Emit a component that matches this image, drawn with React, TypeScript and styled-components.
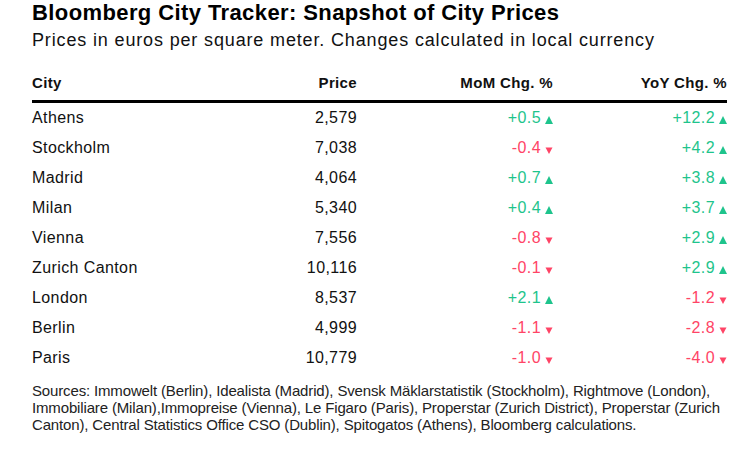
import React from "react";
import styled, { createGlobalStyle } from "styled-components";

const Global = createGlobalStyle`
  html, body { margin: 0; padding: 0; background: #fff; }
  body { font-family: "Liberation Sans", Arial, sans-serif; color: #111; }
`;

const Page = styled.div`
  width: 754px;
  height: 464px;
  padding: 0 27px 0 32px;
  box-sizing: border-box;
  overflow: hidden;
`;

const Title = styled.h1`
  margin: 0;
  padding-top: 1px;
  font-size: 22px;
  line-height: 24px;
  font-weight: 700;
  letter-spacing: 0.4px;
  color: #000;
`;

const Subtitle = styled.p`
  margin: 4px 0 0;
  font-size: 18px;
  line-height: 22px;
  letter-spacing: 0.85px;
  color: #111;
`;

const Table = styled.div`
  margin-top: 22px;
  display: grid;
  grid-template-columns: 200px 125px 196px 174px;
`;

const HeadCell = styled.div<{ $right?: boolean }>`
  font-size: 15px;
  font-weight: 700;
  line-height: 20px;
  letter-spacing: 0.35px;
  padding-bottom: 7px;
  text-align: ${(p) => (p.$right ? "right" : "left")};
  border-bottom: 3px solid #000;
  color: #111;
`;

const Cell = styled.div<{ $right?: boolean }>`
  font-size: 16px;
  line-height: 30px;
  letter-spacing: 0.4px;
  text-align: ${(p) => (p.$right ? "right" : "left")};
  color: #111;
`;

const Change = styled.div<{ $up: boolean }>`
  font-size: 16px;
  line-height: 30px;
  letter-spacing: 0.4px;
  display: flex;
  justify-content: flex-end;
  align-items: center;
  gap: 4px;
  color: ${(p) => (p.$up ? "#1ec48c" : "#ff4466")};
`;

const Arrow = styled.svg`
  width: 8px;
  height: 8px;
  flex: none;
  margin-top: 3px;
`;

const Sources = styled.p`
  margin: 9px 0 0;
  font-size: 15px;
  line-height: 17px;
  color: #222;
  letter-spacing: -0.15px;
  white-space: nowrap;
`;

type Row = { city: string; price: string; mom: string; yoy: string };

const rows: Row[] = [
  { city: "Athens", price: "2,579", mom: "+0.5", yoy: "+12.2" },
  { city: "Stockholm", price: "7,038", mom: "-0.4", yoy: "+4.2" },
  { city: "Madrid", price: "4,064", mom: "+0.7", yoy: "+3.8" },
  { city: "Milan", price: "5,340", mom: "+0.4", yoy: "+3.7" },
  { city: "Vienna", price: "7,556", mom: "-0.8", yoy: "+2.9" },
  { city: "Zurich Canton", price: "10,116", mom: "-0.1", yoy: "+2.9" },
  { city: "London", price: "8,537", mom: "+2.1", yoy: "-1.2" },
  { city: "Berlin", price: "4,999", mom: "-1.1", yoy: "-2.8" },
  { city: "Paris", price: "10,779", mom: "-1.0", yoy: "-4.0" },
];

const ChangeCell = ({ value }: { value: string }) => {
  const up = value.startsWith("+");
  return (
    <Change $up={up}>
      <span>{value}</span>
      <Arrow viewBox="0 0 8 8">
        {up ? (
          <polygon points="4,0 8,8 0,8" fill="currentColor" />
        ) : (
          <polygon points="0.5,1.5 7.5,1.5 4,8" fill="currentColor" />
        )}
      </Arrow>
    </Change>
  );
};

export default function App() {
  return (
    <>
      <Global />
      <Page>
        <Title>Bloomberg City Tracker: Snapshot of City Prices</Title>
        <Subtitle>Prices in euros per square meter. Changes calculated in local currency</Subtitle>
        <Table>
          <HeadCell>City</HeadCell>
          <HeadCell $right>Price</HeadCell>
          <HeadCell $right>MoM Chg. %</HeadCell>
          <HeadCell $right>YoY Chg. %</HeadCell>
          {rows.map((r) => (
            <React.Fragment key={r.city}>
              <Cell>{r.city}</Cell>
              <Cell $right>{r.price}</Cell>
              <ChangeCell value={r.mom} />
              <ChangeCell value={r.yoy} />
            </React.Fragment>
          ))}
        </Table>
        <Sources>
          Sources: Immowelt (Berlin), Idealista (Madrid), Svensk Mäklarstatistik (Stockholm), Rightmove (London),
          <br />
          Immobiliare (Milan),Immopreise (Vienna), Le Figaro (Paris), Properstar (Zurich District), Properstar (Zurich
          <br />
          Canton), Central Statistics Office CSO (Dublin), Spitogatos (Athens), Bloomberg calculations.
        </Sources>
      </Page>
    </>
  );
}
